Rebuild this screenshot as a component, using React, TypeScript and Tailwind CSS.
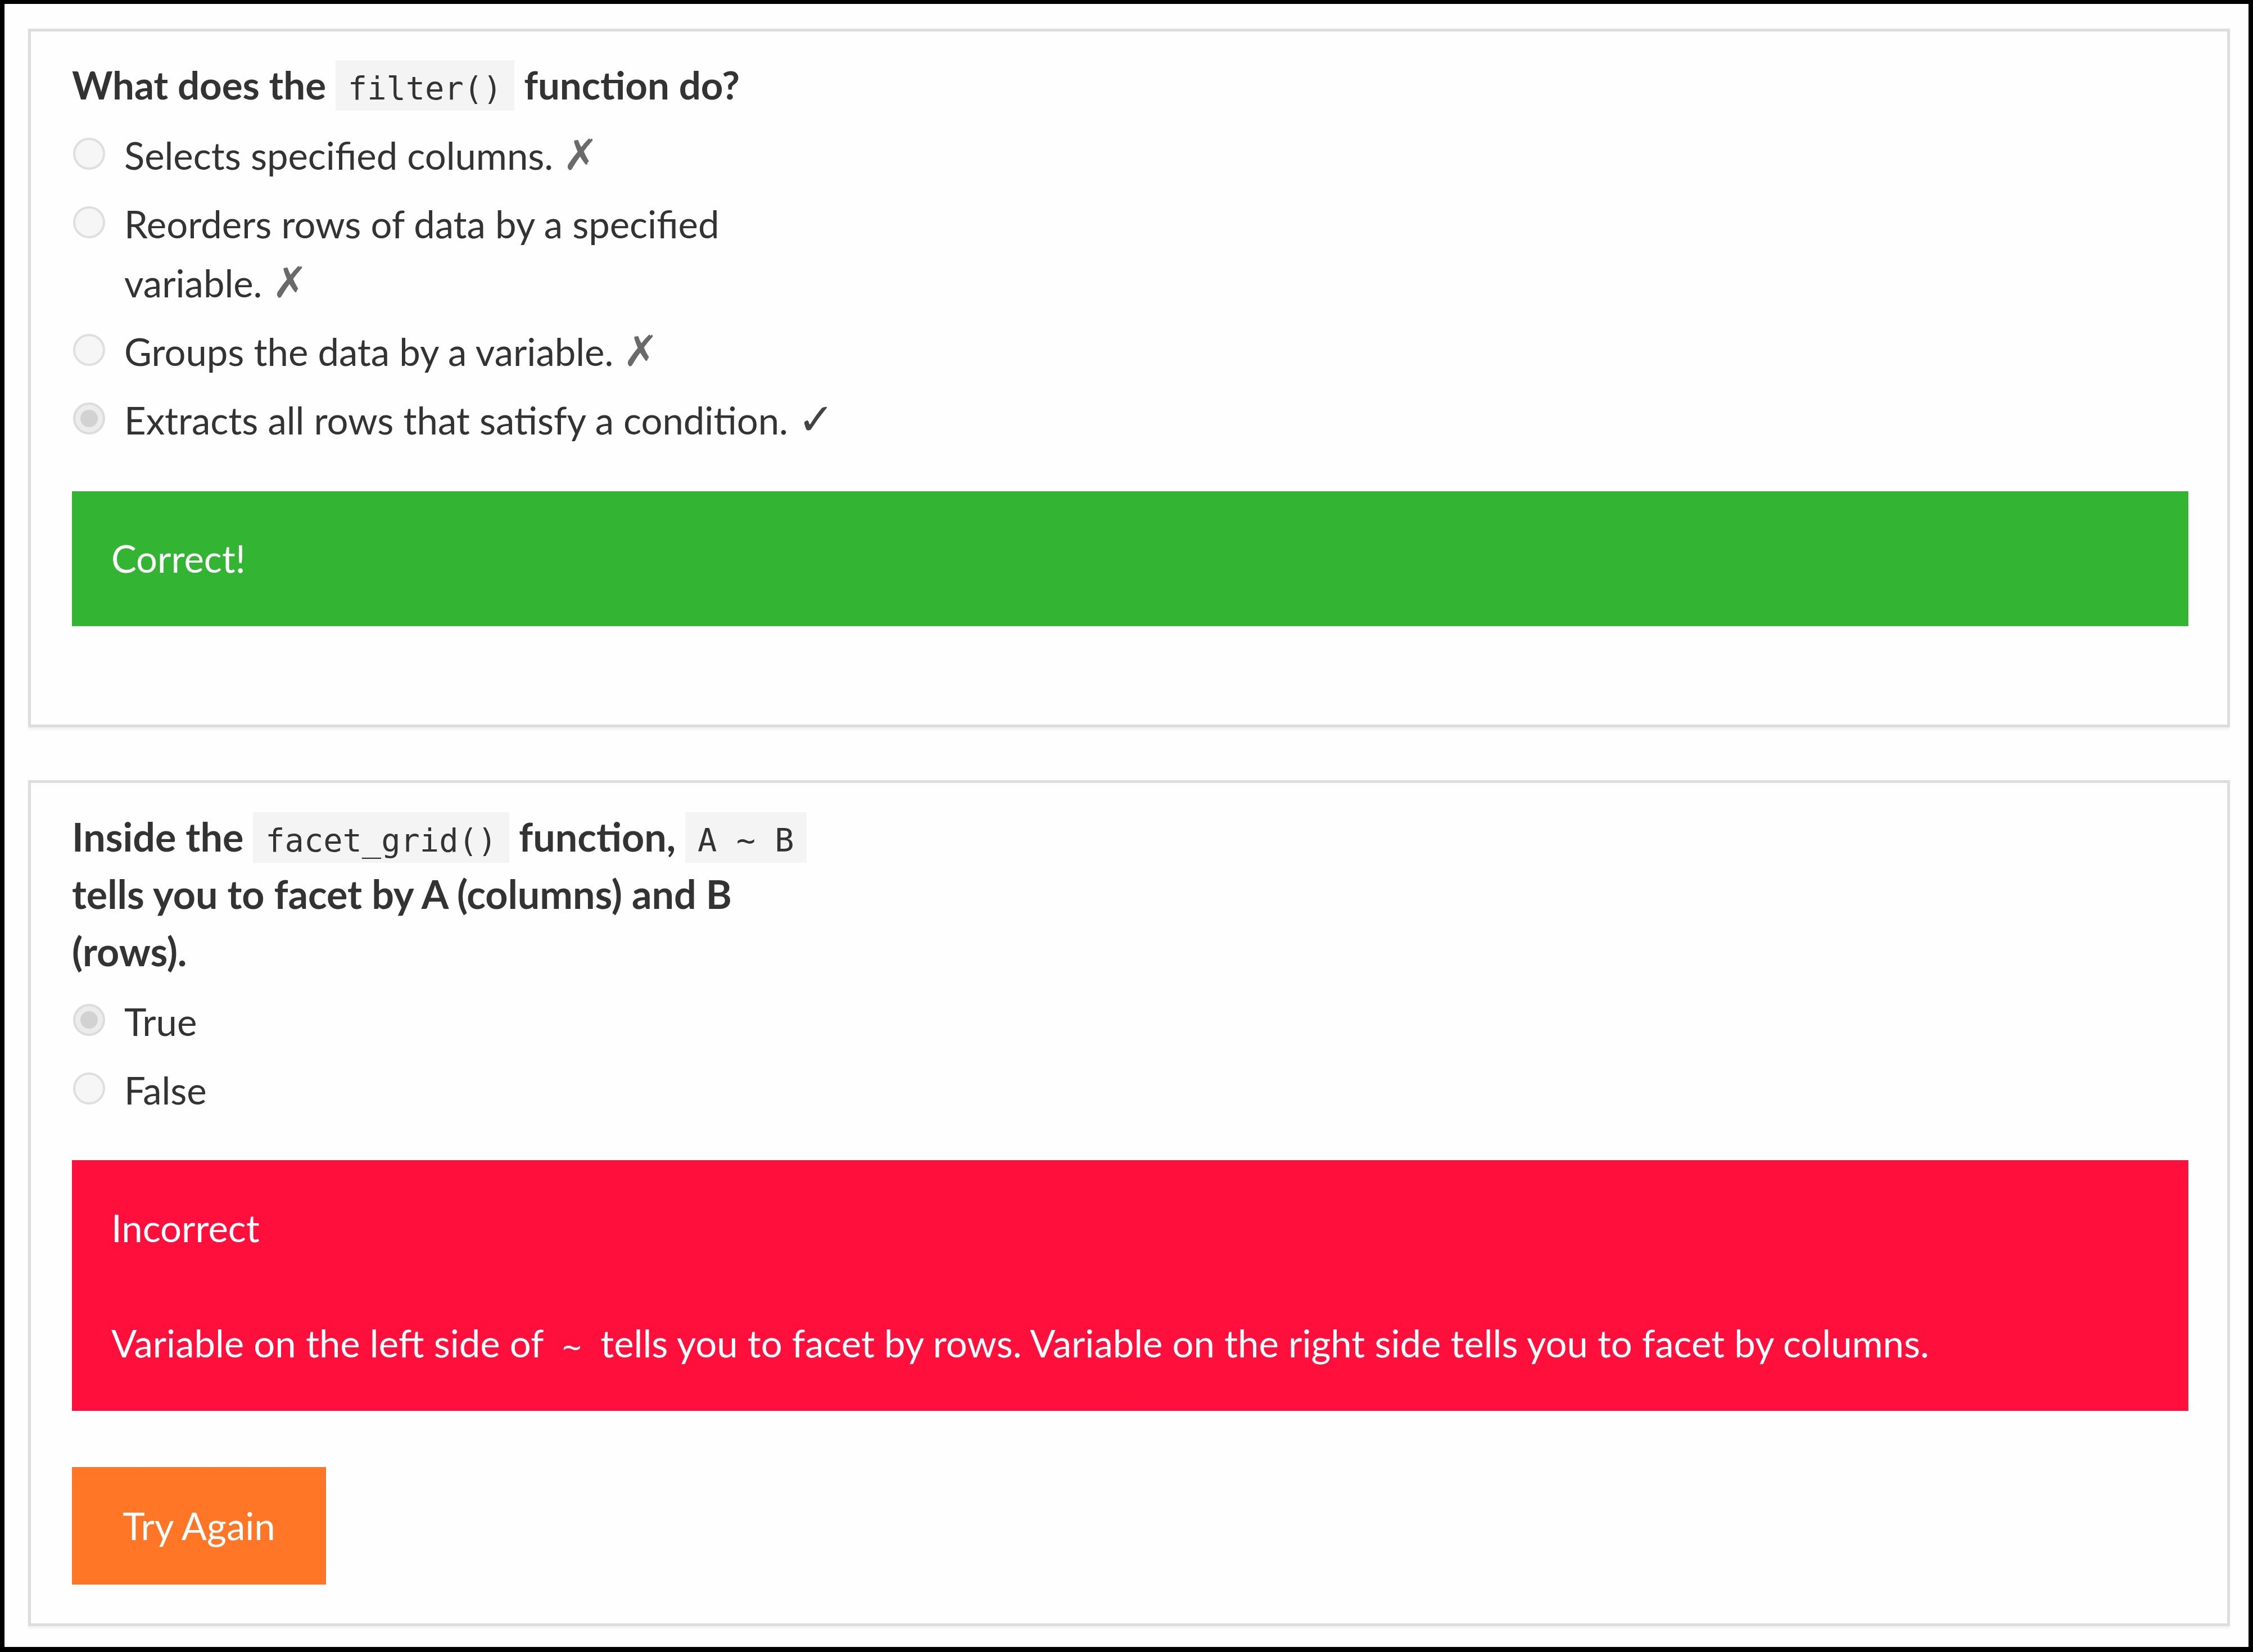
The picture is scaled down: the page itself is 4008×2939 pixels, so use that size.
import React from "react";

const Radio = ({ checked }: { checked?: boolean }) => (
  <span
    className={
      checked
        ? "mt-[21px] ml-[2px] mr-[34px] flex h-[57px] w-[57px] shrink-0 items-center justify-center rounded-full border-[4px] border-[#dcdcdc] bg-[#ececec]"
        : "mt-[21px] ml-[2px] mr-[34px] flex h-[57px] w-[57px] shrink-0 items-center justify-center rounded-full border-[4px] border-[#dfdfdf] bg-[#f6f6f6]"
    }
  >
    {checked && <span className="h-[31px] w-[31px] rounded-full bg-[#d2d2d2]" />}
  </span>
);

const Option = ({ checked, children }: { checked?: boolean; children: React.ReactNode }) => (
  <div className="flex h-[105px] items-start">
    <Radio checked={checked} />
    <span>{children}</span>
  </div>
);

const Option2 = ({ children }: { children: React.ReactNode }) => (
  <div className="flex items-start">
    <Radio />
    <span>{children}</span>
  </div>
);

const Cross = () => (
  <span className="font-['DejaVu_Sans',sans-serif] text-[76px] font-extralight leading-none text-[#6a6a6a]">✗</span>
);

const Check = () => (
  <span className="font-['DejaVu_Sans',sans-serif] text-[78px] leading-none text-[#444444]">✓</span>
);

const Code = ({ children }: { children: React.ReactNode }) => (
  <span className="bg-[#f4f4f4] px-[22px] pt-[17px] pb-[7px] font-['DejaVu_Sans_Mono',monospace] text-[57px] font-normal leading-[60px] text-[#333333]">
    {children}
  </span>
);

export default function App() {
  return (
    <div className="h-[2939px] w-[4008px] bg-black pt-[7px] pr-[8px] pb-[9px] pl-[8px]">
      <div className="flex h-full flex-col gap-[94px] bg-[#fefefe] pt-[44px] pr-[33px] pl-[42px] font-['Lato',sans-serif] text-[67px] leading-[105px] text-[#333333]">
        {/* Card 1 */}
        <div className="border-[5px] border-[#dddddd] bg-[#fefefe] pt-[44px] pr-[69px] pb-[175px] pl-[73px] shadow-[0_4px_4px_rgba(0,0,0,0.05)]">
          <div className="h-[102px] text-[69px] font-bold leading-[102px]">
            What does the <Code>filter()</Code> function do?
          </div>
          <div className="mt-[22px] flex flex-col gap-[17px]">
            <Option>
              Selects specified columns. <Cross />
            </Option>
            <Option2>
              Reorders rows of data by a specified
              <br />
              variable. <Cross />
            </Option2>
            <Option>
              Groups the data by a variable. <Cross />
            </Option>
            <Option checked>
              Extracts all rows that satisfy a condition. <Check />
            </Option>
          </div>
          <div className="mt-[74px] h-[240px] bg-[#33b433] pt-[67px] pl-[70px] text-white">Correct!</div>
        </div>

        {/* Card 2 */}
        <div className="border-[5px] border-[#dddddd] bg-[#fefefe] pt-[44px] pr-[69px] pb-[69px] pl-[73px] shadow-[0_4px_4px_rgba(0,0,0,0.05)]">
          <div className="h-[306px] text-[70px] font-bold leading-[102px]">
            Inside the <Code>facet_grid()</Code> function, <Code>A ~ B</Code>
            <br />
            tells you to facet by A (columns) and B
            <br />
            (rows).
          </div>
          <div className="mt-[22px] flex flex-col gap-[17px]">
            <Option checked>True</Option>
            <Option>False</Option>
          </div>
          <div className="mt-[72px] bg-[#ff0f3b] pt-[68px] pb-[68px] pl-[70px] text-white">
            <p>Incorrect</p>
            <p className="mt-[100px]">
              Variable on the left side of{" "}
              <span className="px-[17px] font-['DejaVu_Sans_Mono',monospace] text-[56px] leading-[60px]">~</span>{" "}
              tells you to facet by rows. Variable on the right side tells you to facet by columns.
            </p>
          </div>
          <button className="mt-[100px] flex h-[209px] w-[452px] items-center justify-center bg-[#ff7626] text-white">
            Try Again
          </button>
        </div>
      </div>
    </div>
  );
}
